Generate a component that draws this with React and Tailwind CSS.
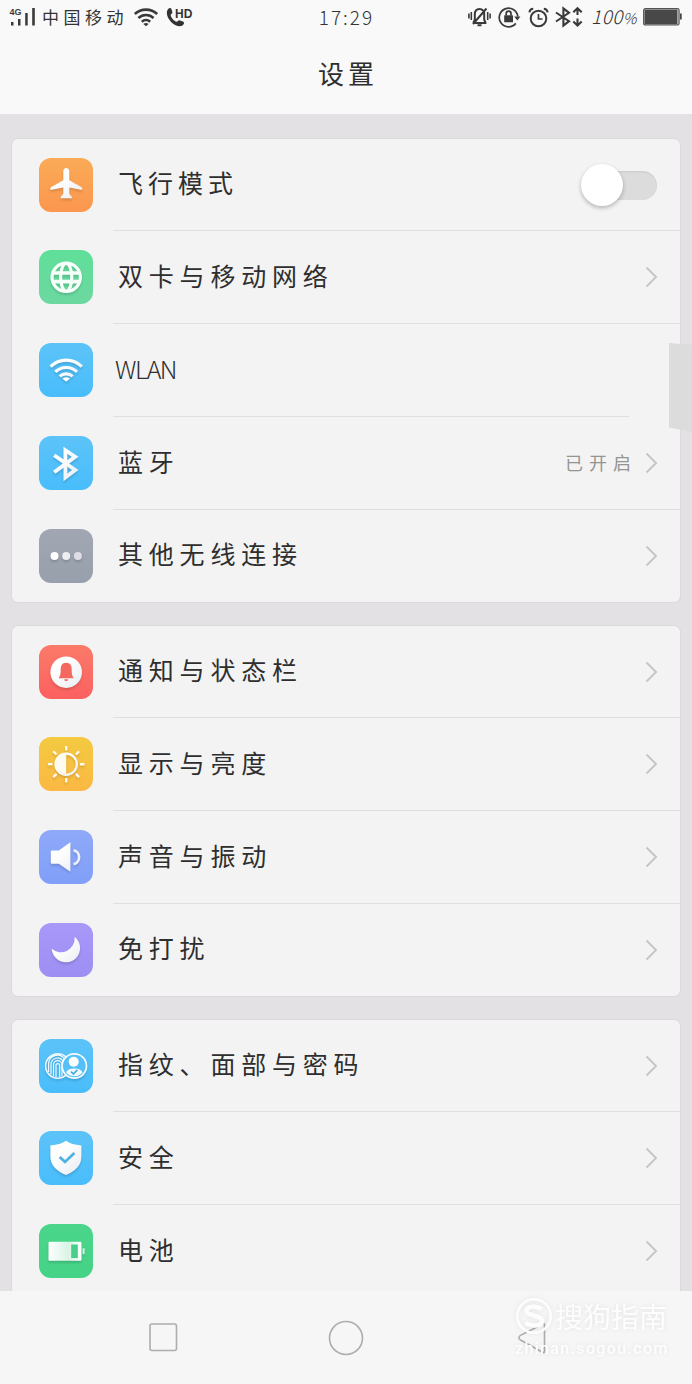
import React from 'react';
import clsx from 'clsx';

const BLUE = 'from-[#5cc3f8] to-[#48bdfb]';

const PlaneIcon = () => (
  <path
    d="M27.3 10c-1.8 0-3 1.4-3 3.4v8.8L12 29.3c-1.3.9-.9 2.7.6 2.4l11.7-2.2v6.1c0 1.2-2.8 2.3-2.8 4.6h11.6c0-2.3-2.8-3.4-2.8-4.6v-6.1L42 31.7c1.5.3 1.9-1.5.6-2.4l-12.3-7.1v-8.8c0-2-1.2-3.4-3-3.4z"
    fill="url(#glyph)"
  />
);

const GlobeIcon = () => (
  <g fill="none" stroke="#f6fffa">
    <circle cx="27.2" cy="27.3" r="14.2" strokeWidth="3.2" />
    <ellipse cx="27.2" cy="27.3" rx="5.6" ry="14" strokeWidth="3.2" />
    <path d="M14 23h26.4M14 31.6h26.4" strokeWidth="3.6" />
  </g>
);

const WlanIcon = () => (
  <g fill="none" stroke="url(#glyph)" strokeWidth="3.2">
    <path d="M11.6 23.6A22 22 0 0 1 42.8 23.6" />
    <path d="M16.4 28.9A15.5 15.5 0 0 1 38 28.9" />
    <path d="M20.8 33.4A9.5 9.5 0 0 1 33.6 33.4" />
    <path d="M27.2 38.8L23.4 35.6Q27.2 32.9 31 35.6z" fill="#fff" stroke="none" />
  </g>
);

const BluetoothIcon = () => (
  <path d="M15.2 19.2L36.2 34L26.4 41.4V14.2L36.2 20.8L15.2 36.2" fill="none" stroke="url(#glyph)" strokeWidth="3.8" />
);

const DotsIcon = () => (
  <g>
    <circle cx="15.5" cy="27" r="4" fill="#fff" />
    <circle cx="27.2" cy="27" r="4" fill="#eceef0" />
    <circle cx="38.9" cy="27" r="4" fill="#dcdfe3" />
  </g>
);

const BellIcon = () => (
  <g>
    <circle cx="27.2" cy="27.2" r="15.8" fill="url(#glyph)" />
    <path d="M27.2 17.8c-4.2 0-5.5 3.2-5.5 6.6 0 4.8-.6 6.4-2.1 8.8h15.2c-1.5-2.4-2.1-4-2.1-8.8 0-3.4-1.3-6.6-5.5-6.6z" fill="#f4685f" />
    <path d="M25.2 34.2h4a2 1.9 0 0 1-4 0z" fill="#f4685f" />
  </g>
);

const SunIcon = () => (
  <g stroke="url(#glyph)" fill="none">
    <circle cx="27.2" cy="27.2" r="10.6" strokeWidth="2.3" />
    <path d="M27.2 17.5a9.7 9.7 0 0 0 0 19.4z" fill="#fffbf0" stroke="none" />
    <path
      d="M27.2 9v4.4M27.25 41v4.4M9 27.2h4.4M41 27.25h4.4M14.3 14.3l3.2 3.2M36.9 36.9l3.2 3.2M14.3 40.1l3.2-3.2M36.9 17.5l3.2-3.2"
      stroke="#fffaf0"
      strokeWidth="2.3"
    />
  </g>
);

const SpeakerIcon = () => (
  <g>
    <path d="M12.8 20.4h7L31.4 12.2v29.6L19.8 33.8h-7a1 1 0 0 1-1-1V21.4a1 1 0 0 1 1-1z" fill="url(#glyph)" />
    <path d="M34.6 20.2a7.2 7.2 0 0 1 0 14" fill="none" stroke="#eef1fb" strokeWidth="2.7" />
  </g>
);

const MoonIcon = () => <path d="M35.5 13.8A14.2 14.2 0 1 1 12.7 25.8A13.8 13.8 0 0 0 35.5 13.8z" fill="url(#glyph)" />;

const FingerFaceIcon = () => (
  <g>
    <g fill="none" stroke="#eef9ff" strokeWidth="1.2">
      <circle cx="18.8" cy="27" r="12.2" strokeWidth="1.5" />
      <path d="M9.6 33V25a8.8 8.8 0 0 1 16-5M12 35.6V25.4a6.6 6.6 0 0 1 12-3.6M14.5 37V25.8a4.2 4.2 0 0 1 8.4 0M17 38V26a1.9 1.9 0 0 1 3.7 0v12M23 28v9M10 19.4a11 11 0 0 1 12-3" />
    </g>
    <circle cx="35.3" cy="27" r="12.2" fill="#55c0f8" stroke="#f4fbff" strokeWidth="1.7" />
    <circle cx="34.7" cy="22.8" r="5" fill="#fff" />
    <path d="M27 33.2c1.800-2.900 4.500-3.700 8.300-3.700s6.500.8 8.300 3.700a10.500 10.500 0 0 1-16.600 0z" fill="#f4fbff" />
    <path d="M32 32.6l2.400 2.300 4-4" fill="none" stroke="#49aee6" strokeWidth="1.8" />
  </g>
);

const ShieldIcon = () => (
  <g>
    <path d="M27 9.8c3.6 2.7 8.8 4.2 15.4 4.6v11.4c0 8.4-6.2 14.6-15.4 18.3-9.2-3.7-15.6-9.9-15.6-18.3V14.4c6.8-.4 12-1.900 15.600-4.600z" fill="url(#glyph)" />
    <path d="M20.6 26l5.4 4.9 9.4-8.8" fill="none" stroke="#4fb2e2" strokeWidth="2.8" />
  </g>
);

const BatteryIcon = () => (
  <g>
    <rect x="9.5" y="17.7" width="33" height="19" rx="1.2" fill="url(#glyphSide)" />
    <rect x="32.200" y="20.5" width="6.6" height="13.6" fill="#46cf88" />
    <rect x="43.6" y="24.3" width="2" height="5.8" fill="#d8f7e7" />
  </g>
);

const GROUPS = [
  [
    { label: '飞行模式', icon: PlaneIcon, bg: 'from-[#faab56] to-[#fb964f]', toggle: true, tracking: 'tracking-[5px]' },
    { label: '双卡与移动网络', icon: GlobeIcon, bg: 'from-[#5fdf99] to-[#6cd8a1]' },
    { label: 'WLAN', icon: WlanIcon, bg: BLUE, latin: true, bare: true },
    { label: '蓝牙', icon: BluetoothIcon, bg: BLUE, value: '已开启', shortLine: true },
    { label: '其他无线连接', icon: DotsIcon, bg: 'from-[#a2a6b3] to-[#97a0ac]' },
  ],
  [
    { label: '通知与状态栏', icon: BellIcon, bg: 'from-[#fb7a69] to-[#fb6060]' },
    { label: '显示与亮度', icon: SunIcon, bg: 'from-[#f3ca40] to-[#fbb843]' },
    { label: '声音与振动', icon: SpeakerIcon, bg: 'from-[#8fa9f8] to-[#809ff8]' },
    { label: '免打扰', icon: MoonIcon, bg: 'from-[#a898f9] to-[#9d8ef3]' },
  ],
  [
    { label: '指纹、面部与密码', icon: FingerFaceIcon, bg: BLUE },
    { label: '安全', icon: ShieldIcon, bg: BLUE },
    { label: '电池', icon: BatteryIcon, bg: 'from-[#4ad58a] to-[#45d388]' },
  ],
];

// shared gradients for the white glyphs
const GlyphDefs = () => (
  <svg className="absolute h-0 w-0" aria-hidden="true">
    <defs>
      <linearGradient id="glyph" gradientUnits="userSpaceOnUse" x1="12" y1="12" x2="42" y2="42">
        <stop offset="0.3" stopColor="#ffffff" />
        <stop offset="1" stopColor="#e9edf2" />
      </linearGradient>
      <linearGradient id="glyphSide" x1="0" y1="0" x2="1" y2="0">
        <stop offset="0" stopColor="#ffffff" />
        <stop offset="0.6" stopColor="#d9f3e5" />
        <stop offset="1" stopColor="#ffffff" />
      </linearGradient>
    </defs>
  </svg>
);

const StatusBar = () => (
  <div className="grid h-[34px] grid-cols-[1fr_auto_1fr] items-center pl-[9px] pr-[10px] text-[#333]">
    <div className="flex items-center">
      <svg width="27" height="20" viewBox="0 0 27 20" fill="#3a3a3a">
        <text x="0.5" y="7.5" fontSize="9" fontWeight="700" fontFamily="Liberation Sans, sans-serif">4G</text>
        <rect x="2" y="15" width="2.5" height="3.5" />
        <rect x="9" y="12" width="2.5" height="6.5" />
        <rect x="16.2" y="6" width="2.5" height="12.5" />
        <rect x="23.2" y="1" width="2.6" height="17.5" />
      </svg>
      <span className="ml-[6px] text-[17px] leading-[20px] tracking-[4.5px]">中国移动</span>
      <svg className="ml-[5px]" width="26" height="20" viewBox="0 0 26 20" fill="none" stroke="#3a3a3a" strokeWidth="2.6">
        <path d="M1.8 7A16.5 16.5 0 0 1 24.2 7" />
        <path d="M5.4 11A11 11 0 0 1 20.6 11" />
        <path d="M8.8 14.7A6.5 6.5 0 0 1 17.2 14.7" />
        <path d="M13 19.2L10.4 16.9Q13 15.1 15.6 16.9z" fill="#3a3a3a" stroke="none" />
      </svg>
      <svg className="ml-[7px]" width="28" height="21" viewBox="0 0 28 21" fill="#333">
        <path d="M2 2.2C3.6.4 5 1 5.6 2.5l.8 2.8c.2 1.2-1.800 1.600-1.700 2.800.4 3 3.400 6.200 6 6.700 1 .1 1.400-1.700 2.600-1.500l3.700 1.300c1.500.7 1.400 2.200 0 3.500-2.400 2.200-7.500 1.300-11.700-2.800C.8 10.800-.3 4.900 2 2.200z" />
        <text x="9" y="10.5" fontSize="12" fontWeight="700" fontFamily="Liberation Sans, sans-serif">HD</text>
      </svg>
    </div>
    <span className="pl-[2px] text-[19px] font-light leading-[20px] tracking-[2px]">17:29</span>
    <div className="flex items-center justify-end">
      <svg width="23" height="20" viewBox="0 0 23 20" fill="none" stroke="#3a3a3a" strokeWidth="1.6">
        <path d="M5.6 15.2L6.8 12.7V7.5C6.8 4 8.8 2 11.5 2S16.200 4 16.200 7.500V12.700L17.400 15.200V16H5.600zM9.500 18.300h4M18.500 1.500L5 17" strokeWidth="2" />
        <path d="M3.3 5v8M.9 6.5v5M19.7 5v8M22.1 6.5v5" />
      </svg>
      <svg className="ml-[7px]" width="23" height="22" viewBox="0 0 23 22" fill="none" stroke="#3a3a3a" strokeWidth="1.700">
        <path d="M17.8 17.4A9.3 9.3 0 1 1 19.800 10.500" />
        <path d="M16.2 10.4h6.200l-3 4z" fill="#3a3a3a" stroke="none" />
        <rect x="6.2" y="9.3" width="8.8" height="7" rx="0.5" fill="#3a3a3a" stroke="none" />
        <path d="M8.2 9.5V7.6a2.400 2.400 0 0 1 4.800 0v1.900" />
      </svg>
      <svg className="ml-[7px]" width="21" height="21" viewBox="0 0 21 21" fill="none" stroke="#3a3a3a" strokeWidth="2">
        <circle cx="10.5" cy="11.5" r="7.8" />
        <path d="M10.5 7v5h4" strokeWidth="1.7" />
        <path d="M1.4 5.300A4 4 0 0 1 5.200 1.800M19.600 5.300A4 4 0 0 0 15.800 1.800" />
      </svg>
      <svg className="ml-[6px]" width="28" height="22" viewBox="0 0 28 22" fill="none" stroke="#3a3a3a" strokeWidth="2.1">
        <path d="M1 6.5L14 15.2L8.4 19.5V2.5L14 6.8L1 15.5" />
        <path d="M22.5 2.5v6.5M22.5 12.5v6.5M18.3 6.3l4.200-4 4.200 4M18.300 15.500l4.200 4 4.200-4" />
      </svg>
      <span className="ml-[8px] flex w-[52px] items-baseline text-[19px] font-light italic leading-[20px] tracking-[0.5px]">
        100<span className="text-[15px]">%</span>
      </span>
      <svg width="39" height="18" viewBox="0 0 39 18">
        <rect x="0.7" y="0.7" width="35.3" height="16.2" rx="1.5" fill="#fff" stroke="#555" strokeWidth="1.3" />
        <rect x="1.5" y="1.5" width="33" height="14.6" fill="#484848" />
        <rect x="37" y="5.5" width="1.7" height="6" fill="#444" />
      </svg>
    </div>
  </div>
);

const Toggle = () => (
  <div className="mr-[23px] flex h-[29px] w-[67px] items-center rounded-full bg-[#dcdcdc] shadow-[inset_0_1px_2px_rgba(0,0,0,0.08)]">
    <div className="-ml-[9px] h-[42px] w-[42px] shrink-0 rounded-full bg-white shadow-[0_2px_4px_rgba(0,0,0,0.26)]" />
  </div>
);

const SettingRow = ({ item, first, last }) => {
  const Icon = item.icon;
  return (
    <div className={clsx('flex shrink-0 items-center pl-[26.5px]', first || last ? 'h-[92px]' : 'h-[93px]')}>
      <div className={clsx('-mt-px h-[54px] w-[54px] shrink-0 rounded-[12px] bg-linear-to-b', item.bg)}>
        <svg className="drop-shadow-[0_2px_1px_rgba(0,0,0,0.14)]" width="54" height="54" viewBox="0 0 54 54">
          <Icon />
        </svg>
      </div>
      <div className="relative ml-[20.5px] flex h-full flex-1 items-center">
        {!first && <div className={clsx('absolute left-0 -top-px h-px bg-[#dfdfdf]', item.shortLine ? 'right-[51px]' : 'right-0')} />}
        <span
          className={clsx(
            'flex-1 whitespace-nowrap pb-[4px] text-[#2e2e2e]',
            item.latin ? 'pl-[2px] text-[25px] font-light tracking-[-1.5px]' : 'pl-[5px] text-[25px]',
            !item.latin && (item.tracking || 'tracking-[5.8px]')
          )}
        >
          {item.label}
        </span>
        {item.value && <span className="mr-[8px] pb-[2px] text-[18px] tracking-[6px] text-[#949494]">{item.value}</span>}
        {item.toggle && <Toggle />}
        {!item.toggle && !item.bare && (
          <svg className="mr-[22px] -mt-px" width="13" height="22" viewBox="0 0 13 22" fill="none" stroke="#c6c6c6" strokeWidth="2">
            <path d="M1.500 1.500L11 11L1.500 20.500" />
          </svg>
        )}
      </div>
    </div>
  );
};

const Watermark = () => (
  <div className="absolute left-[513px] top-[5px] w-[160px] text-[#fdfdfd] drop-shadow-[0_0_2px_rgba(0,0,0,0.08)]">
    <div className="flex items-center">
      <svg width="40" height="40" viewBox="0 0 40 40" fill="none" stroke="currentColor">
        <circle cx="21" cy="20" r="16.7" strokeWidth="2.6" />
        <path d="M29 13C24 9.3 13.5 10 13.5 15S29 19 29 25 18 30.500 12.500 26.500" strokeWidth="4.500" />
      </svg>
      <span className="ml-[2px] whitespace-nowrap text-[28px] leading-[40px]">搜狗指南</span>
    </div>
    <div className="mt-[4px] whitespace-nowrap pl-[2px] font-[Roboto,sans-serif] text-[16px] font-medium leading-[18px] tracking-[1.35px]">
      zhinan.sogou.com
    </div>
  </div>
);

const NavBar = () => (
  <div className="relative h-[93px] w-full shrink-0 bg-[#f6f6f6]">
    <div className="flex h-full items-center pl-[149px] text-[#adadad]">
      <svg width="29" height="29" viewBox="0 0 29 29" fill="none" stroke="currentColor" strokeWidth="1.6">
        <rect x="1" y="1" width="26.500" height="26.500" rx="2" />
      </svg>
      <svg className="ml-[150px]" width="36" height="36" viewBox="0 0 36 36" fill="none" stroke="currentColor" strokeWidth="1.6">
        <circle cx="18" cy="18" r="16.5" />
      </svg>
      <svg className="ml-[152px]" width="32" height="36" viewBox="0 0 32 36" fill="none" stroke="currentColor" strokeWidth="1.6">
        <path d="M26.5 4.2C28 3.300 28.500 3.800 28.500 5V31c0 1.800-.7 2-2 1.200L4.500 20c-2.200-1.400-2.200-3.200 0-4.600z" />
      </svg>
    </div>
    <Watermark />
  </div>
);

export default function App() {
  return (
    <div className="relative flex h-[1384px] w-[692px] flex-col overflow-hidden bg-[#e3e1e4] font-['Noto_Sans_CJK_SC',sans-serif]">
      <GlyphDefs />
      <header className="h-[114px] shrink-0 bg-[#f9f9f9]">
        <StatusBar />
        <h1 className="pl-[4px] pt-[19px] text-center text-[26px] leading-[40px] tracking-[4px] text-[#2e2e2e]">设置</h1>
      </header>

      <main className="flex min-h-0 flex-1 flex-col gap-[24px] overflow-hidden px-[12px] pt-[25px]">
        {GROUPS.map((rows, g) => (
          <section key={g} className="shrink-0 rounded-[6px] bg-[#f3f3f3] shadow-[0_0_0_1px_rgba(0,0,0,0.03)]">
            {rows.map((item, i) => (
              <SettingRow key={item.label} item={item} first={i === 0} last={i === rows.length - 1 && g < 2} />
            ))}
          </section>
        ))}
      </main>

      {/* edge panel handle, floats above the list */}
      <div className="absolute right-0 top-[343px] h-[89px] w-[23px] bg-[#dcdcdc] [clip-path:polygon(0_0,100%_2%,100%_100%,0_95%)]" />

      <NavBar />
    </div>
  );
}
